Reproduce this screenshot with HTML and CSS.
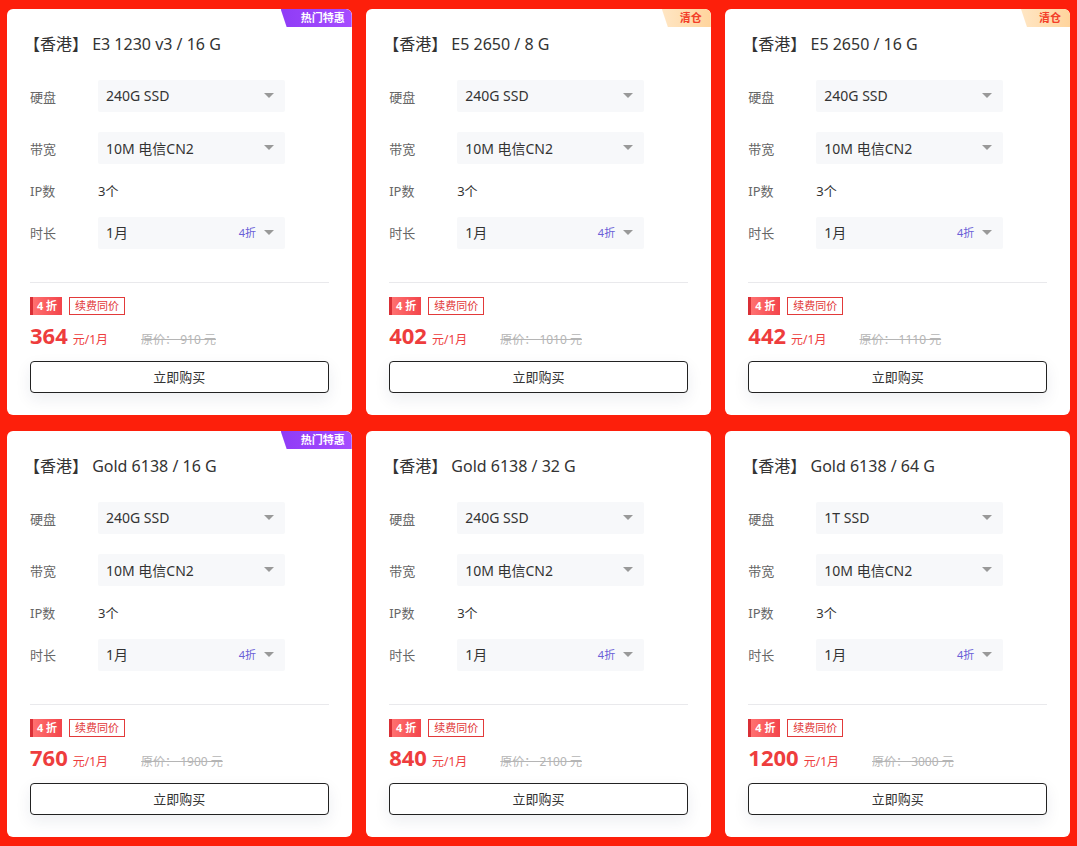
FILE: index.html
```html
<!DOCTYPE html>
<html lang="zh-CN">
<head>
<meta charset="utf-8">
<title>香港服务器</title>
<link rel="stylesheet" href="styles.css">
</head>
<body>
<div class="grid">
  <div class="card">
    <span class="badge hot">热门特惠</span>
    <h3 class="title">【香港】 E3 1230 v3 / 16 G</h3>
    <div class="row"><span class="label">硬盘</span><div class="select"><span>240G SSD</span><i class="arrow"></i></div></div>
    <div class="row"><span class="label">带宽</span><div class="select"><span>10M 电信CN2</span><i class="arrow"></i></div></div>
    <div class="row ip"><span class="label">IP数</span><span class="val">3个</span></div>
    <div class="row last"><span class="label">时长</span><div class="select"><span>1月</span><em class="disc">4折</em><i class="arrow"></i></div></div>
    <div class="divider"></div>
    <div class="tags"><span class="tag-off">4 折</span><span class="tag-line">续费同价</span></div>
    <div class="price"><b>364</b><span class="unit">元/1月</span><s class="orig">原价： 910 元</s></div>
    <button class="buy">立即购买</button>
  </div>
  <div class="card">
    <span class="badge clear">清仓</span>
    <h3 class="title">【香港】 E5 2650 / 8 G</h3>
    <div class="row"><span class="label">硬盘</span><div class="select"><span>240G SSD</span><i class="arrow"></i></div></div>
    <div class="row"><span class="label">带宽</span><div class="select"><span>10M 电信CN2</span><i class="arrow"></i></div></div>
    <div class="row ip"><span class="label">IP数</span><span class="val">3个</span></div>
    <div class="row last"><span class="label">时长</span><div class="select"><span>1月</span><em class="disc">4折</em><i class="arrow"></i></div></div>
    <div class="divider"></div>
    <div class="tags"><span class="tag-off">4 折</span><span class="tag-line">续费同价</span></div>
    <div class="price"><b>402</b><span class="unit">元/1月</span><s class="orig">原价： 1010 元</s></div>
    <button class="buy">立即购买</button>
  </div>
  <div class="card">
    <span class="badge clear">清仓</span>
    <h3 class="title">【香港】 E5 2650 / 16 G</h3>
    <div class="row"><span class="label">硬盘</span><div class="select"><span>240G SSD</span><i class="arrow"></i></div></div>
    <div class="row"><span class="label">带宽</span><div class="select"><span>10M 电信CN2</span><i class="arrow"></i></div></div>
    <div class="row ip"><span class="label">IP数</span><span class="val">3个</span></div>
    <div class="row last"><span class="label">时长</span><div class="select"><span>1月</span><em class="disc">4折</em><i class="arrow"></i></div></div>
    <div class="divider"></div>
    <div class="tags"><span class="tag-off">4 折</span><span class="tag-line">续费同价</span></div>
    <div class="price"><b>442</b><span class="unit">元/1月</span><s class="orig">原价： 1110 元</s></div>
    <button class="buy">立即购买</button>
  </div>
  <div class="card">
    <span class="badge hot">热门特惠</span>
    <h3 class="title">【香港】 Gold 6138 / 16 G</h3>
    <div class="row"><span class="label">硬盘</span><div class="select"><span>240G SSD</span><i class="arrow"></i></div></div>
    <div class="row"><span class="label">带宽</span><div class="select"><span>10M 电信CN2</span><i class="arrow"></i></div></div>
    <div class="row ip"><span class="label">IP数</span><span class="val">3个</span></div>
    <div class="row last"><span class="label">时长</span><div class="select"><span>1月</span><em class="disc">4折</em><i class="arrow"></i></div></div>
    <div class="divider"></div>
    <div class="tags"><span class="tag-off">4 折</span><span class="tag-line">续费同价</span></div>
    <div class="price"><b>760</b><span class="unit">元/1月</span><s class="orig">原价： 1900 元</s></div>
    <button class="buy">立即购买</button>
  </div>
  <div class="card">
    <h3 class="title">【香港】 Gold 6138 / 32 G</h3>
    <div class="row"><span class="label">硬盘</span><div class="select"><span>240G SSD</span><i class="arrow"></i></div></div>
    <div class="row"><span class="label">带宽</span><div class="select"><span>10M 电信CN2</span><i class="arrow"></i></div></div>
    <div class="row ip"><span class="label">IP数</span><span class="val">3个</span></div>
    <div class="row last"><span class="label">时长</span><div class="select"><span>1月</span><em class="disc">4折</em><i class="arrow"></i></div></div>
    <div class="divider"></div>
    <div class="tags"><span class="tag-off">4 折</span><span class="tag-line">续费同价</span></div>
    <div class="price"><b>840</b><span class="unit">元/1月</span><s class="orig">原价： 2100 元</s></div>
    <button class="buy">立即购买</button>
  </div>
  <div class="card">
    <h3 class="title">【香港】 Gold 6138 / 64 G</h3>
    <div class="row"><span class="label">硬盘</span><div class="select"><span>1T SSD</span><i class="arrow"></i></div></div>
    <div class="row"><span class="label">带宽</span><div class="select"><span>10M 电信CN2</span><i class="arrow"></i></div></div>
    <div class="row ip"><span class="label">IP数</span><span class="val">3个</span></div>
    <div class="row last"><span class="label">时长</span><div class="select"><span>1月</span><em class="disc">4折</em><i class="arrow"></i></div></div>
    <div class="divider"></div>
    <div class="tags"><span class="tag-off">4 折</span><span class="tag-line">续费同价</span></div>
    <div class="price"><b>1200</b><span class="unit">元/1月</span><s class="orig">原价： 3000 元</s></div>
    <button class="buy">立即购买</button>
  </div>
</div>
</body>
</html>
```
FILE: styles.css
```css
* { box-sizing: border-box; }
html, body { margin: 0; padding: 0; }
body {
  background: #fd1f0b;
  font-family: "Noto Sans", "Noto Sans CJK SC", sans-serif;
  color: #333;
}
.grid {
  display: grid;
  grid-template-columns: repeat(3, 1fr);
  gap: 16px 14.5px;
  padding: 9px 7px 9px 7px;
}
.card {
  position: relative;
  display: flex;
  flex-direction: column;
  background: #fff;
  border-radius: 6px;
  padding: 24px 23px 22px 23px;
  height: 406px;
  overflow: hidden;
}
.badge {
  position: absolute;
  top: 0;
  right: 0;
  height: 18px;
  line-height: 18px;
  font-size: 11px;
  font-weight: 700;
  padding: 0 7px 0 20px;
  border-top-right-radius: 6px;
  clip-path: polygon(0 0, 100% 0, 100% 100%, 6px 100%);
}
.badge.hot {
  background: linear-gradient(90deg, #8f3cf6, #a64cff);
  color: #fff;
}
.badge.clear {
  background: linear-gradient(90deg, #ffe6c4, #ffd49c);
  color: #f3402a;
  padding-left: 18px;
  padding-right: 9px;
}
.title {
  margin: 0 0 25px -6px;
  font-size: 16px;
  line-height: 22px;
  font-weight: 400;
  color: #333;
}
.row {
  display: flex;
  align-items: center;
  height: 32px;
  margin-bottom: 20px;
}
.row.ip {
  height: 22px;
  margin-top: -4px;
  margin-bottom: 15px;
}
.label {
  width: 68px;
  font-size: 13px;
  color: #666;
}
.val {
  font-size: 13px;
  color: #333;
}
.select {
  width: 187px;
  height: 32px;
  background: #f7f8fa;
  border-radius: 2px;
  display: flex;
  align-items: center;
  padding: 0 11px 1px 8px;
  font-size: 14px;
  color: #333;
}
.select span { flex: 1; }
.disc {
  font-style: normal;
  font-size: 11px;
  color: #6a5fd7;
  margin-right: 8px;
}
.arrow {
  width: 0;
  height: 0;
  border-left: 5px solid transparent;
  border-right: 5px solid transparent;
  border-top: 5px solid #999;
}
.row.last { margin-bottom: 0; }
.divider {
  height: 1px;
  background: #e9e9ec;
  margin: 33px 0 14px;
  flex: none;
}
.tags {
  display: flex;
  gap: 7px;
  height: 18px;
}
.tag-off {
  width: 32px;
  height: 18px;
  line-height: 18px;
  background: linear-gradient(90deg, #d92f36 0, #d92f36 3px, #ff7070 3px, #f3454b 100%);
  color: #fff;
  font-size: 11px;
  font-weight: 700;
  text-align: center;
  padding-left: 2px;
}
.tag-line {
  height: 18px;
  line-height: 16px;
  border: 1px solid #e23a3a;
  color: #e23a3a;
  font-size: 11px;
  padding: 0 5px;
}
.price {
  display: flex;
  align-items: baseline;
  height: 26px;
  margin-top: 7px;
}
.price b {
  font-size: 22px;
  font-weight: 700;
  color: #ee3d3d;
  line-height: 26px;
}
.unit {
  font-size: 12px;
  color: #ee3d3d;
  margin-left: 5px;
}
.orig {
  font-size: 12px;
  color: #b5b5b5;
  margin-left: 33px;
}
.buy {
  display: block;
  width: 100%;
  height: 33px;
  margin-top: 13px;
  background: #fff;
  border: 1px solid #222;
  border-radius: 4px;
  font-family: inherit;
  font-size: 13px;
  color: #333;
  box-shadow: 0 6px 16px rgba(30, 40, 80, 0.08);
}
```
